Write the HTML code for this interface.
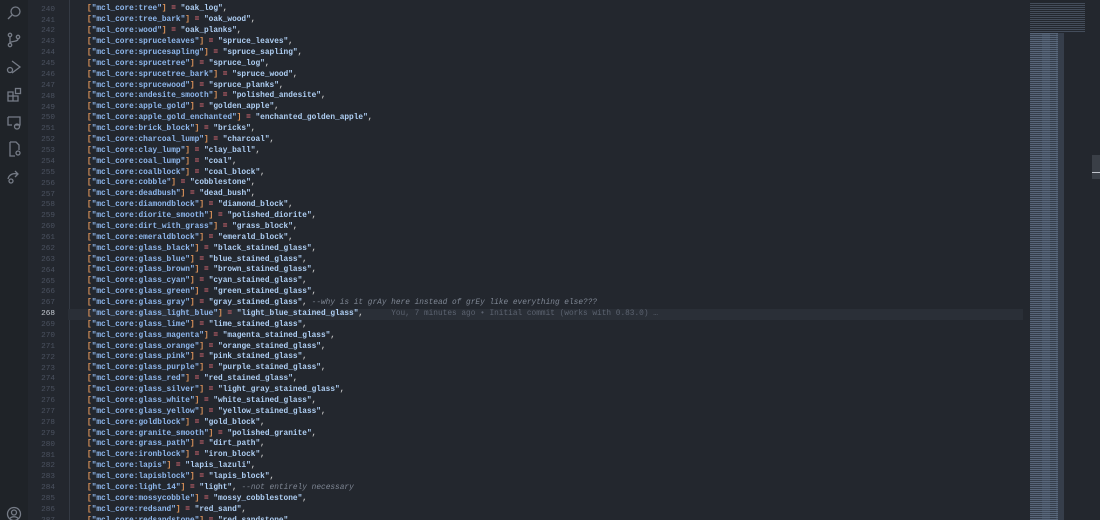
<!DOCTYPE html>
<html><head><meta charset="utf-8"><style>
*{margin:0;padding:0;box-sizing:border-box}
html,body{width:1100px;height:520px;overflow:hidden}
body{background:#23272e;font-family:"Liberation Mono",monospace;position:relative}
#act{position:absolute;left:0;top:0;width:28px;height:520px;background:#1f2328}
#act svg{position:absolute;left:6px;width:16px;height:16px;fill:none;stroke:#767c87;stroke-width:1.3}
.ln{position:absolute;left:28px;width:27px;text-align:right;font-size:7.7px;color:#4b5260;height:10.875px;line-height:10.875px;transform:translateY(1.8px)}
.ln.cur{color:#c9ced6}
#code{position:absolute;left:87px;top:4.4px;font-size:7.8px;line-height:10.875px;color:#e06c75;font-weight:bold}
#code div{height:10.875px;white-space:pre}
.b{color:#e0955a}.k{color:#8fb8ee}.s{color:#b0d0f5}.o{color:#c8c8c8}.c{color:#7f8794;font-style:italic;font-weight:normal}.bl{color:#5c6370;font-weight:normal}
#hl{position:absolute;left:68px;top:308.5px;width:955px;height:11px;background:#2a2f37}
#guide{position:absolute;left:69px;top:0;width:1px;height:520px;background:#343a44}
#mini{position:absolute;left:1028px;top:0;width:64px;height:520px}
#sb{position:absolute;left:1092px;top:155px;width:8px;height:24px;background:#3a3f47}
</style></head><body>
<div id="act">
<svg style="top:5px" viewBox="0 0 16 16"><circle cx="9.5" cy="6.5" r="4.5"/><path d="M6 10L2 14"/></svg>
<svg style="top:32px" viewBox="0 0 16 16"><circle cx="4" cy="3" r="1.7"/><circle cx="4" cy="13" r="1.7"/><circle cx="12" cy="5" r="1.7"/><path d="M4 5v6M12 7c0 3-8 2-8 4"/></svg>
<svg style="top:59px" viewBox="0 0 16 16"><path d="M6 2l8 6-8 6"/><circle cx="4" cy="11" r="2.5"/></svg>
<svg style="top:87px" viewBox="0 0 16 16"><path d="M2 5h5v9H2zM7 9h5v5H7zM2 9h5"/><rect x="9.5" y="1.5" width="5" height="5"/></svg>
<svg style="top:114px" viewBox="0 0 16 16"><path d="M2 3h12v8H9M2 3v8h4"/><circle cx="11" cy="12.5" r="2.5"/></svg>
<svg style="top:141px" viewBox="0 0 16 16"><path d="M4 1h6l3 3v5M4 1v14h5"/><circle cx="12" cy="12" r="2"/></svg>
<svg style="top:168px" viewBox="0 0 16 16"><path d="M2 11c1-5 6-6 9-5M9 3l3 3-3 3"/><circle cx="5" cy="13" r="2"/></svg>
<svg style="top:506px" viewBox="0 0 16 16"><circle cx="8" cy="8" r="6.5"/><circle cx="8" cy="6.5" r="2.5"/><path d="M3.5 13c2-3 7-3 9 0"/></svg>
</div>
<div id="guide"></div>
<div id="hl"></div>
<div id="code"><div><span class="b">[</span><span class="k">"mcl_core:tree"</span><span class="b">]</span> = <span class="s">"oak_log"</span><span class="o">,</span></div><div><span class="b">[</span><span class="k">"mcl_core:tree_bark"</span><span class="b">]</span> = <span class="s">"oak_wood"</span><span class="o">,</span></div><div><span class="b">[</span><span class="k">"mcl_core:wood"</span><span class="b">]</span> = <span class="s">"oak_planks"</span><span class="o">,</span></div><div><span class="b">[</span><span class="k">"mcl_core:spruceleaves"</span><span class="b">]</span> = <span class="s">"spruce_leaves"</span><span class="o">,</span></div><div><span class="b">[</span><span class="k">"mcl_core:sprucesapling"</span><span class="b">]</span> = <span class="s">"spruce_sapling"</span><span class="o">,</span></div><div><span class="b">[</span><span class="k">"mcl_core:sprucetree"</span><span class="b">]</span> = <span class="s">"spruce_log"</span><span class="o">,</span></div><div><span class="b">[</span><span class="k">"mcl_core:sprucetree_bark"</span><span class="b">]</span> = <span class="s">"spruce_wood"</span><span class="o">,</span></div><div><span class="b">[</span><span class="k">"mcl_core:sprucewood"</span><span class="b">]</span> = <span class="s">"spruce_planks"</span><span class="o">,</span></div><div><span class="b">[</span><span class="k">"mcl_core:andesite_smooth"</span><span class="b">]</span> = <span class="s">"polished_andesite"</span><span class="o">,</span></div><div><span class="b">[</span><span class="k">"mcl_core:apple_gold"</span><span class="b">]</span> = <span class="s">"golden_apple"</span><span class="o">,</span></div><div><span class="b">[</span><span class="k">"mcl_core:apple_gold_enchanted"</span><span class="b">]</span> = <span class="s">"enchanted_golden_apple"</span><span class="o">,</span></div><div><span class="b">[</span><span class="k">"mcl_core:brick_block"</span><span class="b">]</span> = <span class="s">"bricks"</span><span class="o">,</span></div><div><span class="b">[</span><span class="k">"mcl_core:charcoal_lump"</span><span class="b">]</span> = <span class="s">"charcoal"</span><span class="o">,</span></div><div><span class="b">[</span><span class="k">"mcl_core:clay_lump"</span><span class="b">]</span> = <span class="s">"clay_ball"</span><span class="o">,</span></div><div><span class="b">[</span><span class="k">"mcl_core:coal_lump"</span><span class="b">]</span> = <span class="s">"coal"</span><span class="o">,</span></div><div><span class="b">[</span><span class="k">"mcl_core:coalblock"</span><span class="b">]</span> = <span class="s">"coal_block"</span><span class="o">,</span></div><div><span class="b">[</span><span class="k">"mcl_core:cobble"</span><span class="b">]</span> = <span class="s">"cobblestone"</span><span class="o">,</span></div><div><span class="b">[</span><span class="k">"mcl_core:deadbush"</span><span class="b">]</span> = <span class="s">"dead_bush"</span><span class="o">,</span></div><div><span class="b">[</span><span class="k">"mcl_core:diamondblock"</span><span class="b">]</span> = <span class="s">"diamond_block"</span><span class="o">,</span></div><div><span class="b">[</span><span class="k">"mcl_core:diorite_smooth"</span><span class="b">]</span> = <span class="s">"polished_diorite"</span><span class="o">,</span></div><div><span class="b">[</span><span class="k">"mcl_core:dirt_with_grass"</span><span class="b">]</span> = <span class="s">"grass_block"</span><span class="o">,</span></div><div><span class="b">[</span><span class="k">"mcl_core:emeraldblock"</span><span class="b">]</span> = <span class="s">"emerald_block"</span><span class="o">,</span></div><div><span class="b">[</span><span class="k">"mcl_core:glass_black"</span><span class="b">]</span> = <span class="s">"black_stained_glass"</span><span class="o">,</span></div><div><span class="b">[</span><span class="k">"mcl_core:glass_blue"</span><span class="b">]</span> = <span class="s">"blue_stained_glass"</span><span class="o">,</span></div><div><span class="b">[</span><span class="k">"mcl_core:glass_brown"</span><span class="b">]</span> = <span class="s">"brown_stained_glass"</span><span class="o">,</span></div><div><span class="b">[</span><span class="k">"mcl_core:glass_cyan"</span><span class="b">]</span> = <span class="s">"cyan_stained_glass"</span><span class="o">,</span></div><div><span class="b">[</span><span class="k">"mcl_core:glass_green"</span><span class="b">]</span> = <span class="s">"green_stained_glass"</span><span class="o">,</span></div><div><span class="b">[</span><span class="k">"mcl_core:glass_gray"</span><span class="b">]</span> = <span class="s">"gray_stained_glass"</span><span class="o">,</span> <span class="c">--why is it grAy here instead of grEy like everything else???</span></div><div><span class="b">[</span><span class="k">"mcl_core:glass_light_blue"</span><span class="b">]</span> = <span class="s">"light_blue_stained_glass"</span><span class="o">,</span>      <span class="bl">You, 7 minutes ago • Initial commit (works with 0.83.0) …</span></div><div><span class="b">[</span><span class="k">"mcl_core:glass_lime"</span><span class="b">]</span> = <span class="s">"lime_stained_glass"</span><span class="o">,</span></div><div><span class="b">[</span><span class="k">"mcl_core:glass_magenta"</span><span class="b">]</span> = <span class="s">"magenta_stained_glass"</span><span class="o">,</span></div><div><span class="b">[</span><span class="k">"mcl_core:glass_orange"</span><span class="b">]</span> = <span class="s">"orange_stained_glass"</span><span class="o">,</span></div><div><span class="b">[</span><span class="k">"mcl_core:glass_pink"</span><span class="b">]</span> = <span class="s">"pink_stained_glass"</span><span class="o">,</span></div><div><span class="b">[</span><span class="k">"mcl_core:glass_purple"</span><span class="b">]</span> = <span class="s">"purple_stained_glass"</span><span class="o">,</span></div><div><span class="b">[</span><span class="k">"mcl_core:glass_red"</span><span class="b">]</span> = <span class="s">"red_stained_glass"</span><span class="o">,</span></div><div><span class="b">[</span><span class="k">"mcl_core:glass_silver"</span><span class="b">]</span> = <span class="s">"light_gray_stained_glass"</span><span class="o">,</span></div><div><span class="b">[</span><span class="k">"mcl_core:glass_white"</span><span class="b">]</span> = <span class="s">"white_stained_glass"</span><span class="o">,</span></div><div><span class="b">[</span><span class="k">"mcl_core:glass_yellow"</span><span class="b">]</span> = <span class="s">"yellow_stained_glass"</span><span class="o">,</span></div><div><span class="b">[</span><span class="k">"mcl_core:goldblock"</span><span class="b">]</span> = <span class="s">"gold_block"</span><span class="o">,</span></div><div><span class="b">[</span><span class="k">"mcl_core:granite_smooth"</span><span class="b">]</span> = <span class="s">"polished_granite"</span><span class="o">,</span></div><div><span class="b">[</span><span class="k">"mcl_core:grass_path"</span><span class="b">]</span> = <span class="s">"dirt_path"</span><span class="o">,</span></div><div><span class="b">[</span><span class="k">"mcl_core:ironblock"</span><span class="b">]</span> = <span class="s">"iron_block"</span><span class="o">,</span></div><div><span class="b">[</span><span class="k">"mcl_core:lapis"</span><span class="b">]</span> = <span class="s">"lapis_lazuli"</span><span class="o">,</span></div><div><span class="b">[</span><span class="k">"mcl_core:lapisblock"</span><span class="b">]</span> = <span class="s">"lapis_block"</span><span class="o">,</span></div><div><span class="b">[</span><span class="k">"mcl_core:light_14"</span><span class="b">]</span> = <span class="s">"light"</span><span class="o">,</span> <span class="c">--not entirely necessary</span></div><div><span class="b">[</span><span class="k">"mcl_core:mossycobble"</span><span class="b">]</span> = <span class="s">"mossy_cobblestone"</span><span class="o">,</span></div><div><span class="b">[</span><span class="k">"mcl_core:redsand"</span><span class="b">]</span> = <span class="s">"red_sand"</span><span class="o">,</span></div><div><span class="b">[</span><span class="k">"mcl_core:redsandstone"</span><span class="b">]</span> = <span class="s">"red_sandstone"</span><span class="o">,</span></div></div>
<div class="ln" style="top:2.6px">240</div><div class="ln" style="top:13.5px">241</div><div class="ln" style="top:24.4px">242</div><div class="ln" style="top:35.2px">243</div><div class="ln" style="top:46.1px">244</div><div class="ln" style="top:57px">245</div><div class="ln" style="top:67.9px">246</div><div class="ln" style="top:78.7px">247</div><div class="ln" style="top:89.6px">248</div><div class="ln" style="top:100.5px">249</div><div class="ln" style="top:111.4px">250</div><div class="ln" style="top:122.2px">251</div><div class="ln" style="top:133.1px">252</div><div class="ln" style="top:144px">253</div><div class="ln" style="top:154.9px">254</div><div class="ln" style="top:165.7px">255</div><div class="ln" style="top:176.6px">256</div><div class="ln" style="top:187.5px">257</div><div class="ln" style="top:198.4px">258</div><div class="ln" style="top:209.2px">259</div><div class="ln" style="top:220.1px">260</div><div class="ln" style="top:231px">261</div><div class="ln" style="top:241.9px">262</div><div class="ln" style="top:252.7px">263</div><div class="ln" style="top:263.6px">264</div><div class="ln" style="top:274.5px">265</div><div class="ln" style="top:285.4px">266</div><div class="ln" style="top:296.2px">267</div><div class="ln cur" style="top:307.1px">268</div><div class="ln" style="top:318px">269</div><div class="ln" style="top:328.9px">270</div><div class="ln" style="top:339.7px">271</div><div class="ln" style="top:350.6px">272</div><div class="ln" style="top:361.5px">273</div><div class="ln" style="top:372.4px">274</div><div class="ln" style="top:383.2px">275</div><div class="ln" style="top:394.1px">276</div><div class="ln" style="top:405px">277</div><div class="ln" style="top:415.9px">278</div><div class="ln" style="top:426.7px">279</div><div class="ln" style="top:437.6px">280</div><div class="ln" style="top:448.5px">281</div><div class="ln" style="top:459.4px">282</div><div class="ln" style="top:470.2px">283</div><div class="ln" style="top:481.1px">284</div><div class="ln" style="top:492px">285</div><div class="ln" style="top:502.9px">286</div><div class="ln" style="top:513.7px">287</div>
<div id="mini">
<div style="position:absolute;left:2px;top:3px;width:55px;height:30px;background:repeating-linear-gradient(#6b7b92 0 1px,transparent 1px 2px);opacity:.45"></div>
<div style="position:absolute;left:2px;top:33px;width:28px;height:487px;background:repeating-linear-gradient(#6f819b 0 1px,#3d4756 1px 2px);opacity:.7"></div>
<div style="position:absolute;left:14px;top:33px;width:24px;height:487px;background:repeating-linear-gradient(90deg,#5a6a80 0 8px,transparent 8px 14px);opacity:.35"></div>
</div>
<div id="sb"></div>
<div style="position:absolute;left:1092px;top:172px;width:8px;height:1px;background:#c0c4cc"></div>
</body></html>
